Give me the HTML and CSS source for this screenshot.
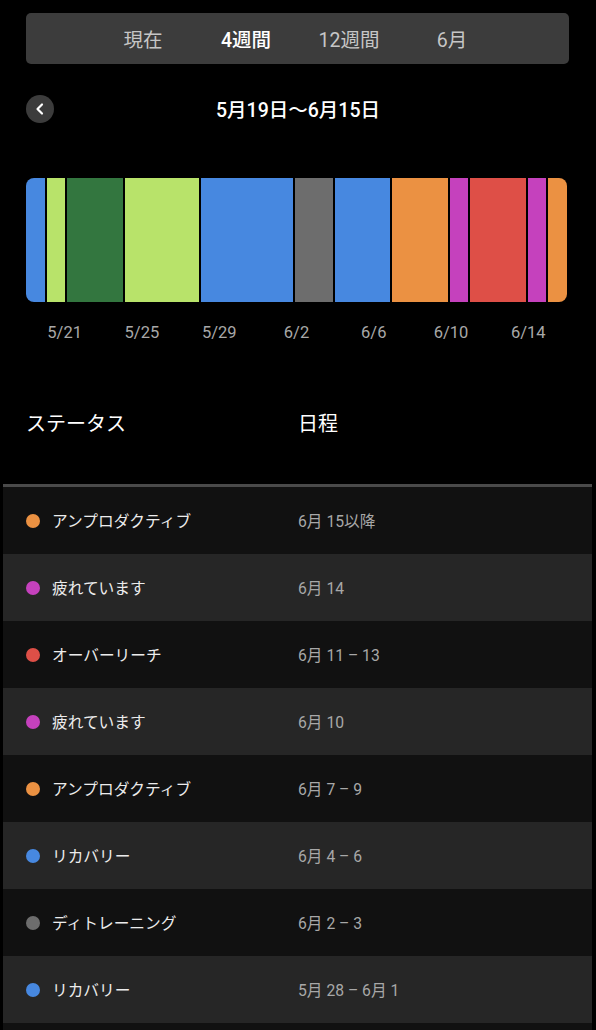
FILE: index.html
```html
<!DOCTYPE html>
<html lang="ja">
<head>
<meta charset="utf-8">
<link rel="stylesheet" href="styles.css">
</head>
<body>
<div class="page">
  <div class="seg">
    <div class="tab">現在</div>
    <div class="tab active">4週間</div>
    <div class="tab">12週間</div>
    <div class="tab">6月</div>
  </div>

  <div class="nav">
    <div class="back">
      <svg width="28" height="28" viewBox="0 0 28 28"><path d="M16 9.5 L11.5 14 L16 18.5" fill="none" stroke="#fff" stroke-width="2.2" stroke-linecap="round" stroke-linejoin="round"/></svg>
    </div>
    <div class="title">5月19日〜6月15日</div>
    <div></div>
  </div>

  <div class="chart">
    <div class="bar c-blue" style="flex-grow:1"></div>
    <div class="bar c-lime" style="flex-grow:1"></div>
    <div class="bar c-green" style="flex-grow:3"></div>
    <div class="bar c-lime" style="flex-grow:4"></div>
    <div class="bar c-blue" style="flex-grow:5"></div>
    <div class="bar c-grey" style="flex-grow:2"></div>
    <div class="bar c-blue" style="flex-grow:3"></div>
    <div class="bar c-orange" style="flex-grow:3"></div>
    <div class="bar c-magenta" style="flex-grow:1"></div>
    <div class="bar c-red" style="flex-grow:3"></div>
    <div class="bar c-magenta" style="flex-grow:1"></div>
    <div class="bar c-orange" style="flex-grow:1"></div>
  </div>

  <div class="axis">
    <span>5/21</span><span>5/25</span><span>5/29</span><span>6/2</span><span>6/6</span><span>6/10</span><span>6/14</span>
  </div>

  <div class="head">
    <div>ステータス</div>
    <div>日程</div>
  </div>

  <div class="table">
    <div class="row"><div class="status"><span class="dot c-orange"></span>アンプロダクティブ</div><div class="date">6月 15以降</div></div>
    <div class="row"><div class="status"><span class="dot c-magenta"></span>疲れています</div><div class="date">6月 14</div></div>
    <div class="row"><div class="status"><span class="dot c-red"></span>オーバーリーチ</div><div class="date">6月 11 – 13</div></div>
    <div class="row"><div class="status"><span class="dot c-magenta"></span>疲れています</div><div class="date">6月 10</div></div>
    <div class="row"><div class="status"><span class="dot c-orange"></span>アンプロダクティブ</div><div class="date">6月 7 – 9</div></div>
    <div class="row"><div class="status"><span class="dot c-blue"></span>リカバリー</div><div class="date">6月 4 – 6</div></div>
    <div class="row"><div class="status"><span class="dot c-grey"></span>ディトレーニング</div><div class="date">6月 2 – 3</div></div>
    <div class="row"><div class="status"><span class="dot c-blue"></span>リカバリー</div><div class="date">5月 28 – 6月 1</div></div>
    <div class="row"><div class="status"></div><div class="date"></div></div>
  </div>
</div>
</body>
</html>
```

FILE: styles.css
```css
html, body {
  margin: 0;
  padding: 0;
  background: #000;
}
body {
  font-family: Roboto, "Noto Sans CJK JP", sans-serif;
  color: #fff;
  width: 596px;
  height: 1030px;
  overflow: hidden;
}
.page {
  padding-top: 13px;
}
.seg {
  margin: 0 27px 0 26px;
  height: 51px;
  background: #3c3c3c;
  border-radius: 5px;
  display: flex;
  justify-content: center;
  align-items: center;
}
.tab {
  width: 103px;
  text-align: center;
  font-size: 19.5px;
  color: #c6c6c6;
}
.tab.active {
  color: #fff;
  font-weight: 500;
}
.nav {
  margin: 30px 26px 0 26px;
  display: grid;
  grid-template-columns: 28px 1fr 28px;
  align-items: center;
  height: 28px;
}
.back {
  width: 28px;
  height: 28px;
  border-radius: 50%;
  background: #3c3c3c;
  display: flex;
}
.title {
  text-align: center;
  font-size: 19.5px;
  font-weight: 500;
}
.chart {
  margin: 56px 29px 0 26px;
  height: 124px;
  display: flex;
  gap: 2px;
  border-radius: 8px;
  overflow: hidden;
}
.bar {
  flex-basis: 0;
}
.c-blue { background: #4788e0; }
.c-lime { background: #b8e36a; }
.c-green { background: #33763f; }
.c-grey { background: #6d6d6d; }
.c-orange { background: #eb9142; }
.c-magenta { background: #c541bd; }
.c-red { background: #de4f47; }
.axis {
  margin: 21px 29px 0 26px;
  display: grid;
  grid-template-columns: repeat(7, 1fr);
  line-height: 20px;
  font-size: 16.5px;
  color: #a8a8a8;
}
.axis span {
  text-align: center;
}
.head {
  margin: 67px 26px 0 26px;
  display: grid;
  grid-template-columns: 272px 1fr;
  font-size: 20px;
  line-height: 28px;
}
.table {
  margin: 46px 4px 0 3px;
  border-top: 3px solid #4a4a4a;
}
.row {
  height: 67px;
  display: grid;
  grid-template-columns: 272px 1fr;
  align-items: center;
  padding-left: 23px;
  background: #111;
  font-size: 15.7px;
}
.row:nth-child(even) {
  background: #262626;
}
.status {
  display: flex;
  align-items: center;
  gap: 12px;
  color: #ececec;
}
.dot {
  width: 14px;
  height: 14px;
  border-radius: 50%;
}
.date {
  color: #a8a8a8;
}
```
